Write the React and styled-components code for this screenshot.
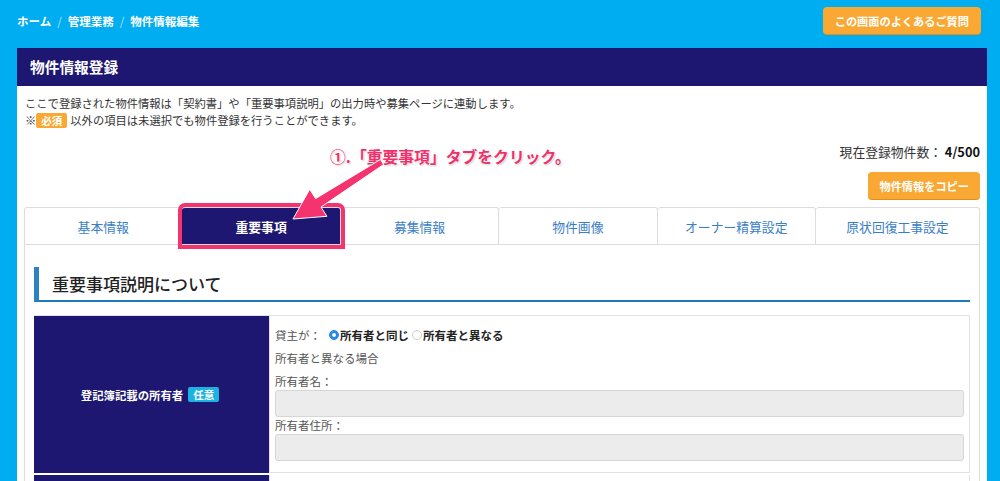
import React from 'react';
import styled, { createGlobalStyle } from 'styled-components';

const GlobalStyle = createGlobalStyle`
  html, body {
    margin: 0;
    padding: 0;
    background: #00adf0;
    font-family: "Noto Sans CJK JP", "Noto Sans", sans-serif;
    color: #333;
  }
  * { box-sizing: border-box; }
`;

const Page = styled.div`
  min-height: 481px;
  background: #00adf0;
  overflow: hidden;
`;

const TopBar = styled.div`
  display: flex;
  justify-content: space-between;
  align-items: center;
  padding: 7px 19px 0 17px;
`;

const Breadcrumb = styled.div`
  display: flex;
  gap: 6px;
  align-items: center;
  font-size: 11.5px;
  font-weight: bold;
  color: #fff;
  span.sep {
    color: #b8e2f7;
    font-weight: normal;
  }
`;

const OrangeButton = styled.button`
  height: 27px;
  padding: 0 ${p => (p.$wide ? 12 : 11)}px;
  background: #f9a834;
  border: none;
  border-radius: 4px;
  box-shadow: 0 1px 0 #e08f1e;
  color: #fff;
  font-family: inherit;
  font-size: 11.2px;
  font-weight: bold;
`;

const Panel = styled.section`
  margin: 14px 13px 0 17px;
  background: #fff;
`;

const PanelHeader = styled.h1`
  margin: 0;
  height: 38px;
  line-height: 38px;
  padding-left: 13px;
  background: #1e1772;
  color: #fff;
  font-size: 14.7px;
  font-weight: bold;
`;

const PanelBody = styled.div`
  position: relative;
  padding: 9px 7px 0 7px;
`;

const Intro = styled.div`
  padding-left: 1px;
  font-size: 11.3px;
  line-height: 17px;
  color: #333;
`;

const Badge = styled.span`
  display: inline-block;
  margin: 0 3px 0 ${p => p.$ml ?? 3}px;
  padding: 0 5px;
  line-height: 15px;
  border-radius: 2px;
  background: ${p => p.$color};
  color: #fff;
  font-size: 10.5px;
  font-weight: bold;
`;

const CountRow = styled.div`
  margin-top: 14px;
  line-height: 18px;
  text-align: right;
  font-size: 12.8px;
  color: #333;
  b { color: #111; }
`;

const CopyRow = styled.div`
  display: flex;
  justify-content: flex-end;
  margin-top: 11px;
`;

const Tabs = styled.div`
  display: flex;
  margin-top: 8px;
`;

const Tab = styled.div`
  position: relative;
  flex: ${p => (p.$last ? '1 1 auto' : '0 0 158.4px')};
  height: 38px;
  display: flex;
  align-items: center;
  justify-content: center;
  border: 1px solid #dcdcdc;
  border-left-width: ${p => (p.$first ? 1 : 0)}px;
  border-radius: 3px 3px 0 0;
  font-size: 12.8px;
  color: ${p => (p.$active ? '#fff' : '#3a7ec6')};
  font-weight: ${p => (p.$active ? 'bold' : 'normal')};
  background: ${p => (p.$active ? '#1e1772' : '#fff')};
  z-index: ${p => (p.$active ? 1 : 0)};
  box-shadow: ${p => (p.$active ? '0 0 0 4px #f5336f' : 'none')};
`;

const TabPanel = styled.div`
  border: 1px solid #dcdcdc;
  border-top: none;
  padding: 22px 9px 0 9px;
`;

const SectionTitle = styled.h2`
  margin: 0;
  height: 35px;
  display: flex;
  align-items: center;
  padding-left: 13px;
  border-left: 5px solid #2f82c2;
  border-bottom: 2px solid #1e7bc0;
  font-size: 17px;
  font-weight: 500;
  color: #222;
`;

const FormTable = styled.div`
  margin-top: 13px;
  display: flex;
  flex-direction: column;
  gap: 2px;
  border-top: 1px solid #e2e2e2;
`;

const FormRow = styled.div`
  display: grid;
  grid-template-columns: 235px 1fr;
  min-height: ${p => p.$min || 0}px;
`;

const LabelCell = styled.div`
  display: flex;
  align-items: center;
  justify-content: center;
  gap: 2px;
  background: #1e1772;
  color: #fff;
  font-size: 11.4px;
  font-weight: bold;
`;

const FieldCell = styled.div`
  border: 1px solid #e2e2e2;
  border-top: none;
  padding: 10px 5px 11px 5px;
  font-size: 11.5px;
  color: #555;
`;

const Line = styled.div`
  display: flex;
  align-items: center;
  line-height: ${p => p.$lh || 17}px;
  margin-bottom: ${p => p.$mb || 0}px;
`;

const RadioLabel = styled.label`
  display: inline-flex;
  align-items: center;
  color: #222;
  font-weight: bold;
  margin-left: ${p => p.$ml || 0}px;
`;

const RadioDot = styled.span`
  display: inline-block;
  width: 10px;
  height: 10px;
  border-radius: 50%;
  margin-right: 1px;
  background: ${p => (p.$checked ? '#1f86ec' : '#fff')};
  border: 1px solid ${p => (p.$checked ? '#1f86ec' : '#cfcfcf')};
  box-shadow: ${p => (p.$checked ? 'inset 0 0 0 2px #1f86ec, inset 0 0 0 5px #fff' : 'none')};
`;

const TextInput = styled.div`
  height: 27px;
  background: #ececec;
  border: 1px solid #d6d6d6;
  border-radius: 3px;
`;

const CalloutText = styled.div`
  position: absolute;
  left: 313px;
  top: 62px;
  line-height: 18px;
  font-size: 15.8px;
  font-weight: bold;
  color: #f0306b;
  text-shadow: 0 0 2px #fff, 0 0 2px #fff, 1px 1px 2px rgba(0,0,0,0.25);
  z-index: 3;
`;

const ArrowSvg = styled.svg`
  position: absolute;
  left: 251px;
  top: 64px;
  overflow: visible;
  z-index: 3;
`;

const tabs = ['基本情報', '重要事項', '募集情報', '物件画像', 'オーナー精算設定', '原状回復工事設定'];

export default function App() {
  return (
    <Page>
      <GlobalStyle />
      <TopBar>
        <Breadcrumb>
          <span>ホーム</span>
          <span className="sep">/</span>
          <span>管理業務</span>
          <span className="sep">/</span>
          <span>物件情報編集</span>
        </Breadcrumb>
        <OrangeButton $wide>この画面のよくあるご質問</OrangeButton>
      </TopBar>

      <Panel>
        <PanelHeader>物件情報登録</PanelHeader>
        <PanelBody>
          <Intro>
            <div>ここで登録された物件情報は「契約書」や「重要事項説明」の出力時や募集ページに連動します。</div>
            <div>
              ※<Badge $color="#f9a834" $ml={0}>必須</Badge>以外の項目は未選択でも物件登録を行うことができます。
            </div>
          </Intro>

          <CountRow>
            現在登録物件数： <b>4/500</b>
          </CountRow>
          <CopyRow>
            <OrangeButton>物件情報をコピー</OrangeButton>
          </CopyRow>

          <Tabs>
            {tabs.map((t, i) => (
              <Tab key={t} $first={i === 0} $last={i === tabs.length - 1} $active={i === 1}>{t}</Tab>
            ))}
          </Tabs>

          <TabPanel>
            <SectionTitle>重要事項説明について</SectionTitle>
            <FormTable>
              <FormRow $min={157}>
                <LabelCell>
                  登記簿記載の所有者<Badge $color="#1db2e0">任意</Badge>
                </LabelCell>
                <FieldCell>
                  <Line $lh={18} $mb={5}>
                    貸主が：
                    <RadioLabel $ml={8}><RadioDot $checked />所有者と同じ</RadioLabel>
                    <RadioLabel $ml={3}><RadioDot />所有者と異なる</RadioLabel>
                  </Line>
                  <Line $lh={18} $mb={6}>所有者と異なる場合</Line>
                  <Line>所有者名：</Line>
                  <TextInput />
                  <Line>所有者住所：</Line>
                  <TextInput />
                </FieldCell>
              </FormRow>
              <FormRow $min={60}>
                <LabelCell />
                <FieldCell />
              </FormRow>
            </FormTable>
          </TabPanel>

          <CalloutText>①.「重要事項」タブをクリック。</CalloutText>
          <ArrowSvg width="130" height="80" viewBox="0 0 130 80">
            <polygon
              points="25,69 41.7,39.3 47.6,48.6 112.4,9.5 115.6,14.5 53,57 58.9,66.3"
              fill="#f5336f"
              stroke="#ffffff"
              strokeWidth="1"
              strokeLinejoin="round"
            />
          </ArrowSvg>
        </PanelBody>
      </Panel>
    </Page>
  );
}
